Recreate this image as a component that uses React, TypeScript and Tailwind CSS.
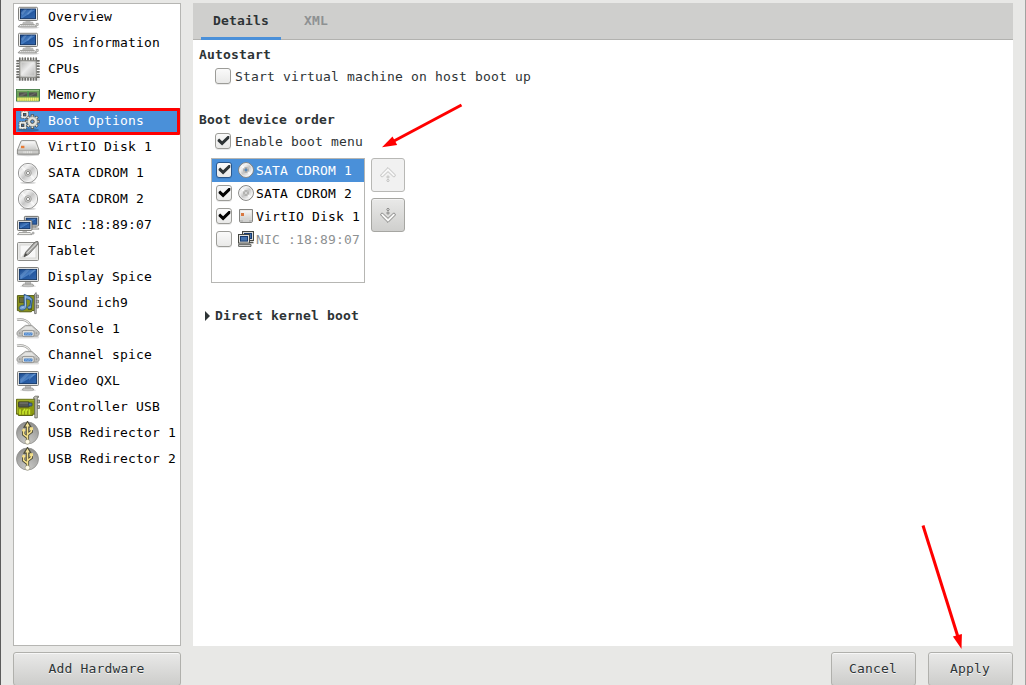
import React, { useState } from "react";
import type { ReactNode } from "react";

type IconProps = { size?: number };

function Svg({ size = 24, children }: { size?: number; children: ReactNode }) {
  return (
    <svg width={size} height={size} viewBox="0 0 24 24" fill="none" className="block shrink-0">
      {children}
    </svg>
  );
}

function Gradients() {
  return (
    <svg width="0" height="0" className="absolute">
      <defs>
        <linearGradient id="screen" x1="0" y1="0" x2="1" y2="1">
          <stop offset="0" stopColor="#16458a" />
          <stop offset="0.5" stopColor="#4a80c4" />
          <stop offset="0.56" stopColor="#2458a0" />
          <stop offset="1" stopColor="#3468ae" />
        </linearGradient>
        <linearGradient id="metal" x1="0" y1="0" x2="1" y2="1">
          <stop offset="0" stopColor="#b8b8b6" />
          <stop offset="0.45" stopColor="#ececec" />
          <stop offset="1" stopColor="#b4b4b2" />
        </linearGradient>
        <linearGradient id="plate" x1="0" y1="0" x2="0" y2="1">
          <stop offset="0" stopColor="#f8f8f8" />
          <stop offset="1" stopColor="#cfcfcd" />
        </linearGradient>
        <linearGradient id="disc" x1="0" y1="0" x2="1" y2="1">
          <stop offset="0" stopColor="#b8b8b8" />
          <stop offset="0.3" stopColor="#f2f2f2" />
          <stop offset="0.5" stopColor="#c6c6c6" />
          <stop offset="0.75" stopColor="#f0f0f0" />
          <stop offset="1" stopColor="#b4b4b4" />
        </linearGradient>
        <radialGradient id="ball" cx="0.5" cy="0.9" r="0.9">
          <stop offset="0" stopColor="#cacac8" />
          <stop offset="0.6" stopColor="#a8a8a6" />
          <stop offset="1" stopColor="#8c8c8a" />
        </radialGradient>
      </defs>
    </svg>
  );
}

function ComputerIcon(p: IconProps) {
  return (
    <Svg {...p}>
      <ellipse cx="13" cy="22.6" rx="10.5" ry="1.2" fill="#000" opacity="0.14" />
      <path d="M9.5 15h5v3h-5z" fill="#c9c9c7" />
      <path d="M7.5 17.2h9l.8 1.2H6.7z" fill="#e4e4e2" stroke="#8a8a88" strokeWidth=".6" />
      <rect x="2.5" y="2.3" width="19" height="13.2" rx="1" fill="#eeeeec" stroke="#73736f" strokeWidth=".9" />
      <rect x="4.5" y="4" width="15" height="9.7" fill="url(#screen)" stroke="#0c2d5e" strokeWidth=".9" />
      <path d="M5 8l3-3.5h3L6.5 10zM11 9l4-4.5h1.5L12 10z" fill="#8db5e4" opacity=".4" />
      <path d="M4.2 19.6h14l2.4 2.2H2.1z" fill="#f4f4f2" stroke="#7d7d7a" strokeWidth=".8" />
      <path d="M5 20.8h13" stroke="#aaaaa8" strokeWidth=".8" strokeDasharray="1.4 .5" />
      <path d="M20.2 18.4h2v2h-2z" fill="#e8e8e6" stroke="#777774" strokeWidth=".6" />
    </Svg>
  );
}

function DisplayIcon(p: IconProps) {
  return (
    <Svg {...p}>
      <ellipse cx="12" cy="21.2" rx="8" ry="1.3" fill="#000" opacity=".12" />
      <path d="M9.6 16.5h4.8l.6 3H9z" fill="#bcbcba" stroke="#888886" strokeWidth=".5" />
      <path d="M7.2 19.2h9.6l.7 1.8h-11z" fill="#f0f0ee" stroke="#777774" strokeWidth=".7" />
      <rect x="1.5" y="2.5" width="21" height="14" rx="1" fill="#e8e8e6" stroke="#747471" strokeWidth=".9" />
      <rect x="3.4" y="4.4" width="17.2" height="10.2" fill="url(#screen)" stroke="#113567" strokeWidth=".9" />
      <path d="M4 10.5l6-6h4L5 13.5zM13 9.5l5-5h2l-7 7z" fill="#8db5e4" opacity=".3" />
    </Svg>
  );
}

const PIN_OFFSETS = [3.8, 6.5, 9.2, 12, 14.8, 17.5, 20.2];

function CpuIcon(p: IconProps) {
  return (
    <Svg {...p}>
      <rect x="0" y="21" width="24" height="2.8" rx="1" fill="#000" opacity=".1" />
      {PIN_OFFSETS.map((n) => (
        <path
          key={n}
          d={`M${n} 1v3.4M${n} 19.6V23M1 ${n}h3.4M19.6 ${n}H23`}
          stroke="#6c6c68"
          strokeWidth="1.7"
          strokeLinecap="round"
        />
      ))}
      <rect x="3.6" y="3.6" width="16.8" height="16.8" rx=".8" fill="#b4b4b2" stroke="#8a8a86" strokeWidth=".9" />
      <rect x="5" y="5" width="14" height="14" rx=".8" fill="url(#metal)" stroke="#dededc" strokeWidth=".8" />
    </Svg>
  );
}

function MemoryIcon(p: IconProps) {
  return (
    <Svg {...p}>
      <rect x=".5" y="6.5" width="23" height="11.5" fill="#6fa05a" stroke="#3f7844" strokeWidth=".9" />
      <path d="M1 7.4h22" stroke="#a5c795" strokeWidth=".9" />
      <rect x="3" y="9.4" width="8.6" height="4" fill="#50514e" />
      <rect x="12.4" y="9.4" width="8.6" height="4" fill="#50514e" />
      <path d="M3 12.4l6-2.6h2v.8L6 13.2zM13 12.8l6-3h2l-6 3.4z" fill="#777872" opacity=".6" />
      <path d="M11.6 8v5.4h.9V8z" fill="#29a047" />
      <path d="M1 14.6h22v3.2H1z" fill="#b9cc4e" />
      <path d="M1.6 16.2h21" stroke="#f2ec7c" strokeWidth="3" strokeDasharray="1.2 .7" />
      <path d="M1 18.8h22" stroke="#000" strokeOpacity=".12" />
    </Svg>
  );
}

const TEETH = [0, 45, 90, 135, 180, 225, 270, 315];

function Gear({ cx, cy, r }: { cx: number; cy: number; r: number }) {
  return (
    <g transform={`translate(${cx} ${cy})`}>
      {TEETH.map((a) => (
        <rect
          key={a}
          x={-r * 0.26}
          y={-r * 1.36}
          width={r * 0.52}
          height={r * 0.6}
          transform={`rotate(${a})`}
          fill="#e4e4dc"
          stroke="#454542"
          strokeWidth=".8"
        />
      ))}
      <circle r={r} fill="#dcdcd4" stroke="#6a6a64" strokeWidth=".5" />
      <circle r={r * 0.78} fill="#e4e4de" />
      <circle r={r * 0.36} fill="#5f96d2" stroke="#454542" strokeWidth=".9" />
    </g>
  );
}

function SquareCog({ x, y }: { x: number; y: number }) {
  return (
    <g>
      <rect x={x} y={y} width="7.4" height="7.4" fill="#f0f0ec" stroke="#55554f" strokeWidth=".8" strokeDasharray="2 .7" />
      <rect x={x + 2.5} y={y + 2.5} width="2.4" height="2.4" fill="#3a6ba4" stroke="#44443f" strokeWidth=".9" />
    </g>
  );
}

function GearsIcon(p: IconProps) {
  return (
    <Svg {...p}>
      <ellipse cx="12" cy="21" rx="11" ry="1.8" fill="#18365c" opacity=".4" />
      <SquareCog x={5} y={2} />
      <Gear cx={16.4} cy={12.6} r={5} />
      <SquareCog x={3} y={12.6} />
    </Svg>
  );
}

function DiskIcon(p: IconProps) {
  return (
    <Svg {...p}>
      <ellipse cx="12" cy="20" rx="11.4" ry="1.2" fill="#000" opacity=".18" />
      <path d="M6.2 5.6h12.4c.7 0 1.2.3 1.4 1l3 8.4v4H1.4v-4L4.8 6.6c.2-.7.7-1 1.4-1z" fill="#e8e8e6" stroke="#858581" strokeWidth=".9" />
      <path d="M6.6 6.6h11.8l2.3 7.4H3.7z" fill="url(#plate)" />
      <path d="M1.5 15h21.4v4H1.5z" fill="#c9c9c7" stroke="#858581" strokeWidth=".7" />
      <path d="M8 16.2v2M9.8 16.2v2M11.6 16.2v2M13.4 16.2v2M15.2 16.2v2" stroke="#ededeb" strokeWidth=".8" />
      <rect x="5" y="10.8" width="3.4" height="2.4" fill="#e87b36" />
    </Svg>
  );
}

function DiscIcon(p: IconProps) {
  return (
    <Svg {...p}>
      <ellipse cx="12" cy="21.8" rx="8" ry="1.3" fill="#000" opacity=".16" />
      <circle cx="12" cy="12" r="9.6" fill="url(#disc)" stroke="#868684" strokeWidth=".9" />
      <circle cx="12" cy="12" r="8.7" stroke="#fff" strokeWidth=".7" opacity=".8" />
      <path d="M6 5.8l4 4.6M14 13.5l4 4.6" stroke="#fff" strokeWidth="2.2" opacity=".65" />
      <circle cx="12" cy="12" r="3.3" fill="#d2d2d0" stroke="#a2a2a0" strokeWidth=".9" />
      <circle cx="12" cy="12" r="1.6" fill="#fff" stroke="#838381" strokeWidth=".9" />
    </Svg>
  );
}

function SmallDiscIcon({ hole }: { hole: string }) {
  return (
    <svg width="16" height="16" viewBox="0 0 16 16" fill="none" className="block shrink-0">
      <circle cx="8" cy="8" r="7.4" fill="url(#disc)" stroke="#80807e" />
      <circle cx="8" cy="8" r="6.4" stroke="#fff" strokeWidth=".7" opacity=".8" />
      <path d="M3.5 3.5l3 3M9.5 9.5l3 3" stroke="#fff" strokeWidth="1.8" opacity=".7" />
      <circle cx="8" cy="8" r="2.6" fill="#e2e2e0" stroke="#aaaaa8" strokeWidth=".9" />
      <circle cx="8" cy="8" r="1.4" fill={hole} stroke="#747472" strokeWidth=".6" />
    </svg>
  );
}

function NetworkIcon(p: IconProps) {
  return (
    <Svg {...p}>
      <path d="M14 12h6v3h-6z" fill="#d6d6d4" stroke="#8a8a88" strokeWidth=".6" />
      <rect x="8.4" y="3.4" width="14.2" height="9.6" rx=".8" fill="#e6e6e4" stroke="#62625e" strokeWidth=".9" />
      <rect x="10.2" y="5.2" width="10.6" height="6" fill="url(#screen)" stroke="#0f3266" strokeWidth=".9" />
      <path d="M14 15h8.5l.4 1.3H14z" fill="#efefed" stroke="#777774" strokeWidth=".6" />
      <rect x="1.5" y="7.6" width="14.4" height="9.8" rx=".8" fill="#f0f0ee" stroke="#62625e" strokeWidth=".9" />
      <rect x="3.4" y="9.4" width="10.6" height="6.2" fill="url(#screen)" stroke="#0f3266" strokeWidth=".9" />
      <path d="M6.5 18h4.5v1.3H6.5z" fill="#bbbbb9" />
      <path d="M3 19.6h11.3l1.7 2H1.5z" fill="#f6f6f4" stroke="#777774" strokeWidth=".7" />
      <path d="M16.3 19.2h1.7v1.8h-1.7z" fill="#d8d8d6" stroke="#777774" strokeWidth=".5" />
    </Svg>
  );
}

function TabletIcon(p: IconProps) {
  return (
    <Svg {...p}>
      <rect x="1.5" y="3.5" width="21" height="18" rx="1" fill="#e9e9e7" stroke="#81817e" strokeWidth=".9" />
      <rect x="4" y="6" width="16" height="13" fill="#f7f7f7" stroke="#cfcfcd" strokeWidth=".8" />
      <path d="M5 18.6l4-5 3 2-3 3z" fill="#d2d2d0" />
      <path d="M21.9 2.6c-1.3-.5-2.8.4-3.9 1.5L9.8 13l-1.8 4.7 4.4-2.2 8.1-8.7c1-1.1 2-3.2 1.4-4.2z" fill="#a8a8a6" stroke="#62625f" strokeWidth=".9" />
      <path d="M20.5 4l-9.2 9.8" stroke="#dededc" strokeWidth="1" />
      <path d="M8 17.7l1.6-3.4 1.5 1.5z" fill="#454542" />
    </Svg>
  );
}

function SoundCardIcon(p: IconProps) {
  return (
    <Svg {...p}>
      <path d="M1.4 4.6h17v15H16l-.7 1.2H3.4l-.6-1.2H1.4z" fill="#89921d" stroke="#4b520b" strokeWidth=".9" />
      <rect x="3.4" y="6.5" width="5.2" height="5" fill="#686a3e" stroke="#454718" strokeWidth=".6" />
      <path d="M12 16h4v3h-4zM13 7h3v2h-3z" fill="#59600e" />
      <path d="M18.6 3l1.6-1.4V22.6h-1.6z" fill="#d4d4d2" stroke="#61615d" strokeWidth=".8" />
      <path d="M20.4 4h2v3h-2zM20.4 9h2v3h-2zM20.4 14h2v3h-2z" fill="#c4c4c2" stroke="#61615d" strokeWidth=".7" />
      <path
        d="M8.2 3.3c2.9 1.6 6.6 1.7 8.2 4.8l-1.1 8.4c-.2 1.7-3.7 2-3.7.1 0-1.4 1.5-2 2.3-1.6l.7-5.4c-1.4-1.1-3.1-1.6-4.7-1.7l.5 8.3c0 2.9-6.7 4.2-7.2 1.3-.4-2.5 3-3.8 4.9-3z"
        fill="#729fd2"
        stroke="#234f86"
        strokeWidth=".9"
      />
      <path d="M9.1 5l.6 10.6M5.3 17.2c.6-.9 1.8-1.3 2.9-1.1" stroke="#bed5f0" strokeWidth=".8" />
    </Svg>
  );
}

function SerialIcon(p: IconProps) {
  return (
    <Svg {...p}>
      <rect x="1" y="18.5" width="22" height="3" rx="1.3" fill="#000" opacity=".13" />
      <path d="M1 2.8C7 1.6 13 3.6 14.6 9.4" stroke="#9a9a97" strokeWidth="2.4" />
      <path d="M1 2.8C7 1.6 13 3.6 14.6 9.4" stroke="#e9e9e7" strokeWidth="1.1" />
      <path d="M9.4 8.4h6.4l6.4 5.6c1.3 1 1.3 3.2.3 4.2l-1.2.9H2.7L1.4 18.2c-.7-1.2-.6-3 .5-4z" fill="#c4c4c2" stroke="#949491" strokeWidth=".9" />
      <path d="M9.6 9.4h5.9l3.6 3.6H5z" fill="#e4e4e2" />
      <rect x="6.2" y="13.4" width="12" height="6.2" rx="1.8" fill="#dededc" stroke="#868683" strokeWidth=".8" />
      <rect x="8" y="15.4" width="8.5" height="3" rx=".7" fill="#4b84c9" />
      <path d="M8.8 16.4h7M9.4 17.7h6" stroke="#a9cdf3" strokeWidth=".7" strokeDasharray=".8 .7" />
      <path d="M3 15.2h1.5v2H3zM19.7 15.2h1.5v2h-1.5z" fill="#9d9d9b" />
    </Svg>
  );
}

function CardIcon(p: IconProps) {
  return (
    <Svg {...p}>
      <path d="M.5 4.3h18.4v14.9h-2.2v1.3H2.4v-1.3H.5z" fill="#8d9a12" stroke="#50590a" strokeWidth=".9" />
      <path d="M1.3 5.2h17M1.3 5.2v13" stroke="#bbc54b" strokeWidth=".7" />
      <path d="M4 19.5v-5.2M7 19.5v-3l2-2.4M10 19.5v-3.4l1.6-1.8M13.4 19.5v-5.2" stroke="#c9e82a" strokeWidth="1.6" />
      <rect x="2.6" y="6.9" width="10.6" height="5.2" rx=".6" fill="#55574f" stroke="#33352d" strokeWidth=".8" />
      <path d="M3.5 8h8.5" stroke="#92958b" strokeWidth=".7" />
      <rect x="12.6" y="8" width="3.4" height="3" rx=".5" fill="#5276a4" stroke="#2e3f57" strokeWidth=".8" />
      <path d="M17.6 2.4l1.6-1.2h3.3v1.2h-1.2v20.5h-2.5V3.7h-1.2z" fill="#c2c2b6" stroke="#62635b" strokeWidth=".8" />
      <path d="M21.6 5h1.9v3h-1.9zM21.6 10.5h1.9v3h-1.9z" fill="#c1c1be" stroke="#5c5d57" strokeWidth=".7" />
    </Svg>
  );
}

function UsbIcon(p: IconProps) {
  return (
    <Svg {...p}>
      <circle cx="11.5" cy="12" r="11" fill="url(#ball)" stroke="#8e8e8c" strokeWidth=".8" />
      <g stroke="#4a4936" strokeWidth="3.2" strokeLinecap="round">
        <path d="M11.5 5v14M11.5 16.4l-3.8-3V9.6M11.5 13.6l3.8-3V8" />
        <path d="M11.5 2.5L9.8 5.2h3.4z" />
      </g>
      <path d="M11.5 4v16M11.5 16.4l-3.8-3V9.6M11.5 13.6l3.8-3V8" stroke="#f4e08a" strokeWidth="1.5" />
      <path d="M11.5 1.5L9.2 5.4h4.6z" fill="#f4e49a" />
      <circle cx="7.7" cy="9.2" r="1.6" fill="#f4e08a" />
      <path d="M13.8 6.2H17v3h-3.2z" fill="#f4e08a" />
      <circle cx="11.5" cy="20.8" r="2.4" fill="#fffbe8" stroke="#8a866a" strokeWidth=".5" />
    </Svg>
  );
}

function SmallDiskIcon() {
  return (
    <svg width="16" height="16" viewBox="0 0 16 16" fill="none" className="block shrink-0">
      <path d="M1.5 1.5h13v11.7l-.8 1.3H2.3l-.8-1.3z" fill="#dededc" stroke="#858582" />
      <path d="M2.5 2.5h11v9.2h-11z" fill="url(#plate)" />
      <path d="M2 12h12v2H2z" fill="#bdbdbb" />
      <path d="M6 12.2v1.5M8 12.2v1.5M10 12.2v1.5" stroke="#f1f1ef" />
      <rect x="3" y="5" width="3" height="3" fill="#d97840" />
    </svg>
  );
}

function SmallNetworkIcon() {
  return (
    <svg width="16" height="16" viewBox="0 0 16 16" fill="none" className="block shrink-0">
      <rect x="4.5" y=".5" width="11" height="9" fill="#d8d8d6" stroke="#454742" />
      <rect x="6" y="2" width="8" height="6" fill="#173b70" />
      <rect x="7" y="3" width="6" height="4" fill="#3f6ca8" />
      <path d="M12 11.5h3.5" stroke="#555753" strokeWidth="1.6" />
      <rect x=".5" y="3.5" width="11" height="8.6" fill="#e0e0de" stroke="#454742" />
      <rect x="2" y="5" width="8" height="5.6" fill="#173b70" />
      <rect x="3" y="6" width="6" height="3.6" fill="#4472ae" />
      <path d="M.6 13.4h12.4v2H.6z" fill="#dcdcda" stroke="#555753" strokeWidth=".9" />
    </svg>
  );
}

const HARDWARE: { label: string; Icon: (p: IconProps) => ReactNode }[] = [
  { label: "Overview", Icon: ComputerIcon },
  { label: "OS information", Icon: ComputerIcon },
  { label: "CPUs", Icon: CpuIcon },
  { label: "Memory", Icon: MemoryIcon },
  { label: "Boot Options", Icon: GearsIcon },
  { label: "VirtIO Disk 1", Icon: DiskIcon },
  { label: "SATA CDROM 1", Icon: DiscIcon },
  { label: "SATA CDROM 2", Icon: DiscIcon },
  { label: "NIC :18:89:07", Icon: NetworkIcon },
  { label: "Tablet", Icon: TabletIcon },
  { label: "Display Spice", Icon: DisplayIcon },
  { label: "Sound ich9", Icon: SoundCardIcon },
  { label: "Console 1", Icon: SerialIcon },
  { label: "Channel spice", Icon: SerialIcon },
  { label: "Video QXL", Icon: DisplayIcon },
  { label: "Controller USB", Icon: CardIcon },
  { label: "USB Redirector 1", Icon: UsbIcon },
  { label: "USB Redirector 2", Icon: UsbIcon },
];

type CheckBoxProps = { checked: boolean; onToggle: () => void; tone?: string; border?: string };

function CheckBox({ checked, onToggle, tone = "#2e3436", border = "border-[#9c9c98]" }: CheckBoxProps) {
  return (
    <button
      type="button"
      role="checkbox"
      aria-checked={checked}
      onClick={onToggle}
      className={`flex size-4 shrink-0 items-center justify-center rounded-[3px] border bg-linear-to-b from-[#fafafa] to-[#e9e9e8] shadow-[0_1px_0_rgba(0,0,0,0.08)] ${border}`}
    >
      {checked && (
        <svg width="14" height="14" viewBox="0 0 14 14" className="block shrink-0">
          <path d="M1.6 6L3.2 4.4l2.9 2.8L11.6 2h1.7v2.6L6.1 11.6 1.6 7.2z" fill={tone} />
        </svg>
      )}
    </button>
  );
}

function MoveButton({ down = false, disabled = false }: { down?: boolean; disabled?: boolean }) {
  return (
    <button
      type="button"
      aria-label={down ? "Move down" : "Move up"}
      disabled={disabled}
      className={
        disabled
          ? "flex size-[34px] items-center justify-center rounded-[3px] border border-[#b8b8b5] bg-[#f1f1f1]"
          : "flex size-[34px] items-center justify-center rounded-[3px] border border-[#a6a6a2] bg-linear-to-b from-[#e9e9e8] to-[#cfcfcd] shadow-[inset_0_1px_0_#f4f4f4]"
      }
    >
      <svg
        width="16"
        height="16"
        viewBox="0 0 16 16"
        fill={disabled ? "#f7f7f7" : "#f8f8f7"}
        stroke={disabled ? "#b4b4b2" : "#6a6a68"}
        strokeWidth=".8"
        className={down ? "block rotate-180" : "block"}
      >
        <path d="M8 .6l6.6 6.6c.9.9.8 1.7.3 2.2s-1.4.5-2.1-.2L8 4.6 3.2 9.2c-.7.7-1.6.7-2.1.2s-.6-1.3.3-2.2z" strokeLinejoin="round" />
        <circle cx="8" cy="10" r="1.1" />
        <circle cx="8" cy="13.5" r="1.1" />
      </svg>
    </button>
  );
}

function ActionButton({ label, width }: { label: string; width: string }) {
  return (
    <button
      type="button"
      className={`${width} h-[34px] shrink-0 rounded-[3px] border border-[#b0b0ac] bg-linear-to-b from-[#e9e9e8] to-[#cdcdcb] text-center text-[#2e3436] shadow-[inset_0_1px_0_#f7f7f7] [text-shadow:0_1px_#f5f5f5]`}
    >
      <span className="-ml-px">{label}</span>
    </button>
  );
}

const DEVICES: { label: string; icon: ReactNode }[] = [
  { label: "SATA CDROM 1", icon: <SmallDiscIcon hole="#4a90d9" /> },
  { label: "SATA CDROM 2", icon: <SmallDiscIcon hole="#fff" /> },
  { label: "VirtIO Disk 1", icon: <SmallDiskIcon /> },
  { label: "NIC :18:89:07", icon: <SmallNetworkIcon /> },
];

export default function App() {
  const [autostart, setAutostart] = useState(false);
  const [bootMenu, setBootMenu] = useState(true);
  const [enabled, setEnabled] = useState([true, true, true, false]);
  const toggle = (index: number) => setEnabled((list) => list.map((on, i) => (i === index ? !on : on)));

  return (
    <div className="relative flex h-[685px] w-[1026px] gap-3 overflow-hidden border-r border-l border-r-[#a2a2a0] border-l-[#5c5c5c] bg-[#e8e8e6] px-3 pt-[3px] font-['DejaVu_Sans_Mono',monospace] text-[13px] leading-4 tracking-[0.174px] whitespace-nowrap text-[#2e3436]">
      <Gradients />

      <aside className="flex w-[168px] shrink-0 flex-col gap-1.5">
        <ul className="h-[643px] shrink-0 border border-[#b6b6b3] bg-white text-black">
          {HARDWARE.map(({ label, Icon }) => {
            const selected = label === "Boot Options";
            return (
              <li
                key={label}
                className={
                  selected
                    ? "relative flex h-[26px] items-center gap-2 bg-[#4a90d9] pl-0.5 text-white"
                    : "flex h-[26px] items-center gap-2 pl-0.5"
                }
              >
                <Icon size={24} />
                <span>{label}</span>
                {selected && (
                  <span className="absolute top-0 right-0 -bottom-px -left-px rounded-[1px] border-[3px] border-[#ff0000]" />
                )}
              </li>
            );
          })}
        </ul>
        <ActionButton label="Add Hardware" width="w-full" />
      </aside>

      <main className="flex w-[820px] shrink-0 flex-col gap-1.5">
        <section className="h-[643px] shrink-0 bg-white">
          <nav className="flex h-[37px] border-b border-[#b2b2af] bg-[#cfcfcd] pl-2 font-bold">
            <button type="button" className="h-[37px] w-20 border-b-[3px] border-[#4a90d9] pt-0.5 text-center">
              Details
            </button>
            <button type="button" className="h-[37px] w-[70px] border-b-[3px] border-transparent pt-0.5 text-center text-[#8e9192]">
              XML
            </button>
          </nav>

          <div className="pt-[7px] pl-1.5">
            <h2 className="font-bold">Autostart</h2>
            <label className="mt-[5px] flex items-center gap-1 pl-4">
              <CheckBox checked={autostart} onToggle={() => setAutostart(!autostart)} />
              <span className="-mb-0.5">Start virtual machine on host boot up</span>
            </label>

            <h2 className="mt-7 font-bold">Boot device order</h2>
            <label className="mt-[5px] flex items-center gap-1 pl-4">
              <CheckBox checked={bootMenu} onToggle={() => setBootMenu(!bootMenu)} />
              <span className="-mb-0.5">Enable boot menu</span>
            </label>

            <div className="mt-[9px] flex gap-1.5 pl-3">
              <ul className="h-[125px] w-[154px] border border-[#b6b6b3] text-black">
                {DEVICES.map(({ label, icon }, index) => (
                  <li
                    key={label}
                    className={
                      index === 0
                        ? "flex h-[23px] items-start bg-[#4a90d9] pt-[3px] pl-1 text-white"
                        : index === 3
                          ? "flex h-[23px] items-start pt-[3px] pl-1 text-[#8e9192]"
                          : "flex h-[23px] items-start pt-[3px] pl-1"
                    }
                  >
                    <CheckBox
                      checked={enabled[index]}
                      onToggle={() => toggle(index)}
                      tone={index === 0 ? "#2e3436" : "#000"}
                      border={index === 0 ? "border-[#2a578c]" : "border-[#9c9c98]"}
                    />
                    <span className="mr-0.5 ml-1.5 flex w-4 shrink-0 justify-center">{icon}</span>
                    <span className="pt-px">{label}</span>
                  </li>
                ))}
              </ul>
              <div className="flex flex-col gap-1.5">
                <MoveButton disabled />
                <MoveButton down />
              </div>
            </div>

            <div className="mt-[25px] flex items-center gap-[5px] pl-1.5 font-bold">
              <svg width="5" height="10" viewBox="0 0 5 10" className="block">
                <path d="M0 0l5 5-5 5z" fill="#2e3436" />
              </svg>
              <span>Direct kernel boot</span>
            </div>
          </div>
        </section>

        <div className="flex justify-end gap-3">
          <ActionButton label="Cancel" width="w-[85px]" />
          <ActionButton label="Apply" width="w-[85px]" />
        </div>
      </main>

      <svg className="pointer-events-none absolute top-0 -left-px" width="1026" height="685" viewBox="0 0 1026 685">
        <g stroke="#f00" strokeWidth="3" fill="#f00">
          <path d="M461.5 105L393 141.5" />
          <path d="M923 525.5L958 637" />
          <path d="M382 147.3l10.5-10.7 4.7 8.3z" stroke="none" />
          <path d="M961.5 649l-8.6-12.6 9-2.4z" stroke="none" />
        </g>
      </svg>
    </div>
  );
}
